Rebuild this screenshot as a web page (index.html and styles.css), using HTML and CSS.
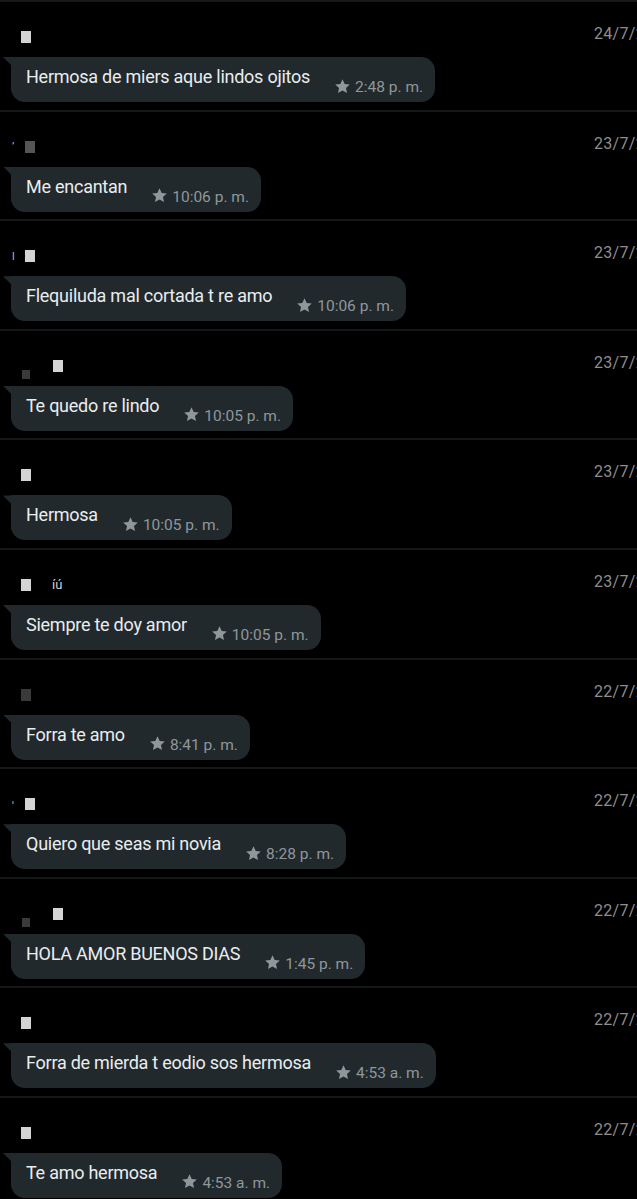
FILE: index.html
```html
<!DOCTYPE html>
<html lang="es">
<head>
<meta charset="utf-8">
<title>Mensajes destacados</title>
<link rel="stylesheet" href="styles.css">
</head>
<body>
<svg width="0" height="0" class="defs" aria-hidden="true">
  <defs>
    <symbol id="star" viewBox="0 0 24 24"><path d="M12 1.8l3.1 6.6 7.2.8-5.4 5 1.5 7.1L12 17.8l-6.4 3.5 1.5-7.1-5.4-5 7.2-.8z"/></symbol>
  </defs>
</svg>
<main class="list">
  <section class="item">
    <div class="head"><div class="who"><span class="sq"></span></div><div class="date">24/7/24</div></div>
    <div class="bubble"><span class="txt">Hermosa de miers aque lindos ojitos</span><span class="meta"><svg class="star"><use href="#star"/></svg>2:48 p. m.</span></div>
  </section>
  <section class="item">
    <div class="head"><div class="who"><span class="mark">ʼ</span><span class="sq dim"></span></div><div class="date">23/7/24</div></div>
    <div class="bubble"><span class="txt">Me encantan</span><span class="meta"><svg class="star"><use href="#star"/></svg>10:06 p. m.</span></div>
  </section>
  <section class="item">
    <div class="head"><div class="who"><span class="mark">l</span><span class="sq"></span></div><div class="date">23/7/24</div></div>
    <div class="bubble"><span class="txt">Flequiluda mal cortada t re amo</span><span class="meta"><svg class="star"><use href="#star"/></svg>10:06 p. m.</span></div>
  </section>
  <section class="item">
    <div class="head"><div class="who shifted"><span class="sq dark low"></span><span class="sq"></span></div><div class="date">23/7/24</div></div>
    <div class="bubble"><span class="txt">Te quedo re lindo</span><span class="meta"><svg class="star"><use href="#star"/></svg>10:05 p. m.</span></div>
  </section>
  <section class="item">
    <div class="head"><div class="who"><span class="sq"></span></div><div class="date">23/7/24</div></div>
    <div class="bubble"><span class="txt">Hermosa</span><span class="meta"><svg class="star"><use href="#star"/></svg>10:05 p. m.</span></div>
  </section>
  <section class="item">
    <div class="head"><div class="who"><span class="sq"></span><span class="name">íú</span></div><div class="date">23/7/24</div></div>
    <div class="bubble"><span class="txt">Siempre te doy amor</span><span class="meta"><svg class="star"><use href="#star"/></svg>10:05 p. m.</span></div>
  </section>
  <section class="item">
    <div class="head"><div class="who"><span class="sq dark"></span></div><div class="date">22/7/24</div></div>
    <div class="bubble"><span class="txt">Forra te amo</span><span class="meta"><svg class="star"><use href="#star"/></svg>8:41 p. m.</span></div>
  </section>
  <section class="item">
    <div class="head"><div class="who"><span class="mark">ˈ</span><span class="sq"></span></div><div class="date">22/7/24</div></div>
    <div class="bubble"><span class="txt">Quiero que seas mi novia</span><span class="meta"><svg class="star"><use href="#star"/></svg>8:28 p. m.</span></div>
  </section>
  <section class="item">
    <div class="head"><div class="who shifted"><span class="sq dark low"></span><span class="sq"></span></div><div class="date">22/7/24</div></div>
    <div class="bubble"><span class="txt">HOLA AMOR BUENOS DIAS</span><span class="meta"><svg class="star"><use href="#star"/></svg>1:45 p. m.</span></div>
  </section>
  <section class="item">
    <div class="head"><div class="who"><span class="sq"></span></div><div class="date">22/7/24</div></div>
    <div class="bubble"><span class="txt">Forra de mierda t eodio sos hermosa</span><span class="meta"><svg class="star"><use href="#star"/></svg>4:53 a. m.</span></div>
  </section>
  <section class="item">
    <div class="head"><div class="who"><span class="sq"></span></div><div class="date">22/7/24</div></div>
    <div class="bubble"><span class="txt">Te amo hermosa</span><span class="meta"><svg class="star"><use href="#star"/></svg>4:53 a. m.</span></div>
  </section>
</main>
</body>
</html>
```
FILE: styles.css
```css
html, body {
  margin: 0;
  padding: 0;
  background: #000;
}
body {
  width: 637px;
  height: 1199px;
  overflow: hidden;
  font-family: Roboto, "Noto Sans", sans-serif;
  color: #e9edef;
}
.defs {
  position: absolute;
  width: 0;
  height: 0;
}
.list {
  display: flex;
  flex-direction: column;
  border-top: 2px solid #161819;
}
.item {
  height: 107.6px;
  border-bottom: 2px solid #151718;
  display: flex;
  flex-direction: column;
  padding-left: 11px;
  box-sizing: content-box;
}
.head {
  display: grid;
  grid-template-columns: 1fr 43px;
  height: 20px;
  margin-top: 25px;
  align-items: center;
}
.who {
  display: flex;
  align-items: center;
  gap: 7px;
  padding-left: 10px;
  height: 20px;
}
.who.shifted {
  gap: 23px;
  padding-left: 11px;
}
.mark {
  font-size: 11px;
  color: #bbb;
  margin-left: -9px;
  width: 6px;
}
.sq {
  display: block;
  width: 10px;
  height: 12px;
  background: #d4d4d4;
}
.sq.dim {
  background: #555;
}
.sq.dark {
  background: #3a3a3a;
}
.sq.low {
  width: 8px;
  height: 9px;
  margin-top: 18px;
}
.name {
  font-size: 13px;
  color: #d0d0d0;
  margin-left: 14px;
}
.date {
  align-self: start;
  margin-top: -3px;
  font-size: 16px;
  line-height: 20px;
  color: #8e8e8e;
  white-space: nowrap;
  overflow: hidden;
  letter-spacing: 0.3px;
}
.bubble {
  position: relative;
  align-self: flex-start;
  margin-top: 10px;
  display: flex;
  align-items: flex-end;
  gap: 24px;
  min-height: 45px;
  box-sizing: border-box;
  padding: 7px 12px 6px 15px;
  background: #22292d;
  border-radius: 0 14px 14px 14px;
}
.bubble::before {
  content: "";
  position: absolute;
  top: 0;
  left: -8px;
  width: 12px;
  height: 12px;
  background: #22292d;
  clip-path: polygon(0 0, 100% 0, 100% 100%);
}
.txt {
  align-self: flex-start;
  font-size: 18px;
  line-height: 22px;
  letter-spacing: -0.25px;
  padding-top: 2px;
}
.meta {
  display: flex;
  align-items: center;
  gap: 4px;
  font-size: 15.5px;
  color: #8f979b;
  white-space: nowrap;
  line-height: 18px;
}
.star {
  width: 17px;
  height: 17px;
  fill: #8f979b;
  margin-top: -2px;
}
```
